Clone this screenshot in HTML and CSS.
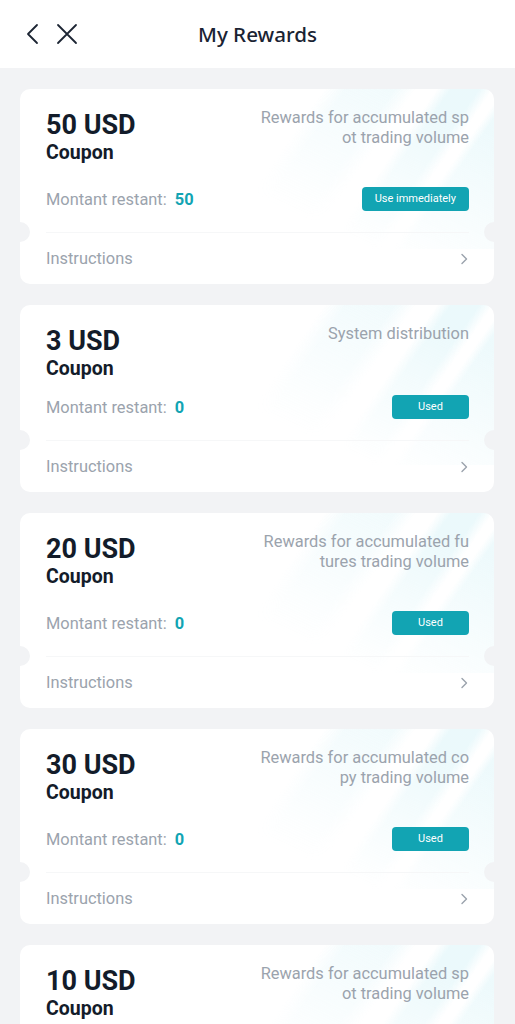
FILE: index.html
```html
<!DOCTYPE html>
<html>
<head>
<meta charset="utf-8">
<link rel="stylesheet" href="styles.css">
</head>
<body>
<header class="topbar">
  <div class="nav-icons">
    <svg class="icon" width="20" height="22" viewBox="0 0 20 22"><path d="M13 2 L4 11 L13 20" fill="none" stroke="#1c2533" stroke-width="1.8" stroke-linecap="round" stroke-linejoin="round"/></svg>
    <svg class="icon" width="22" height="22" viewBox="0 0 22 22"><path d="M2 2 L20 20 M20 2 L2 20" fill="none" stroke="#1c2533" stroke-width="1.8" stroke-linecap="round"/></svg>
  </div>
  <h1 class="title">My Rewards</h1>
</header>
<main class="list">
  <section class="card">
    <div class="top">
      <div class="amount"><div class="value">50 USD</div><div class="kind">Coupon</div></div>
      <div class="desc">Rewards for accumulated sp<br>ot trading volume</div>
    </div>
    <div class="remain-row">
      <div class="remain">Montant restant: <span class="num">50</span></div>
      <button class="btn">Use immediately</button>
    </div>
    <div class="foot"><span>Instructions</span><svg width="8" height="12" viewBox="0 0 8 12"><path d="M2 1.5 L6.5 6 L2 10.5" fill="none" stroke="#9aa2ac" stroke-width="1.4" stroke-linecap="round" stroke-linejoin="round"/></svg></div>
  </section>
  <section class="card">
    <div class="top">
      <div class="amount"><div class="value">3 USD</div><div class="kind">Coupon</div></div>
      <div class="desc">System distribution</div>
    </div>
    <div class="remain-row">
      <div class="remain">Montant restant: <span class="num">0</span></div>
      <button class="btn used">Used</button>
    </div>
    <div class="foot"><span>Instructions</span><svg width="8" height="12" viewBox="0 0 8 12"><path d="M2 1.5 L6.5 6 L2 10.5" fill="none" stroke="#9aa2ac" stroke-width="1.4" stroke-linecap="round" stroke-linejoin="round"/></svg></div>
  </section>
  <section class="card">
    <div class="top">
      <div class="amount"><div class="value">20 USD</div><div class="kind">Coupon</div></div>
      <div class="desc">Rewards for accumulated fu<br>tures trading volume</div>
    </div>
    <div class="remain-row">
      <div class="remain">Montant restant: <span class="num">0</span></div>
      <button class="btn used">Used</button>
    </div>
    <div class="foot"><span>Instructions</span><svg width="8" height="12" viewBox="0 0 8 12"><path d="M2 1.5 L6.5 6 L2 10.5" fill="none" stroke="#9aa2ac" stroke-width="1.4" stroke-linecap="round" stroke-linejoin="round"/></svg></div>
  </section>
  <section class="card">
    <div class="top">
      <div class="amount"><div class="value">30 USD</div><div class="kind">Coupon</div></div>
      <div class="desc">Rewards for accumulated co<br>py trading volume</div>
    </div>
    <div class="remain-row">
      <div class="remain">Montant restant: <span class="num">0</span></div>
      <button class="btn used">Used</button>
    </div>
    <div class="foot"><span>Instructions</span><svg width="8" height="12" viewBox="0 0 8 12"><path d="M2 1.5 L6.5 6 L2 10.5" fill="none" stroke="#9aa2ac" stroke-width="1.4" stroke-linecap="round" stroke-linejoin="round"/></svg></div>
  </section>
  <section class="card">
    <div class="top">
      <div class="amount"><div class="value">10 USD</div><div class="kind">Coupon</div></div>
      <div class="desc">Rewards for accumulated sp<br>ot trading volume</div>
    </div>
    <div class="remain-row">
      <div class="remain">Montant restant: <span class="num">10</span></div>
      <button class="btn">Use immediately</button>
    </div>
    <div class="foot"><span>Instructions</span><svg width="8" height="12" viewBox="0 0 8 12"><path d="M2 1.5 L6.5 6 L2 10.5" fill="none" stroke="#9aa2ac" stroke-width="1.4" stroke-linecap="round" stroke-linejoin="round"/></svg></div>
  </section>
</main>
</body>
</html>
```
FILE: styles.css
```css
* { box-sizing: border-box; }
html, body { margin: 0; padding: 0; }
body {
  background: #f2f3f5;
  font-family: Roboto, "Noto Sans", Arial, sans-serif;
  width: 515px;
  height: 1024px;
  overflow: hidden;
}
.topbar {
  position: relative;
  height: 68px;
  background: #fff;
  display: flex;
  align-items: center;
  justify-content: center;
}
.nav-icons {
  position: absolute;
  left: 24px;
  top: 23px;
  display: flex;
  gap: 12px;
  align-items: center;
}
.icon { display: block; }
.title {
  margin: 0;
  font-family: "Noto Sans", sans-serif;
  font-size: 20.6px;
  font-weight: 500;
  color: #1a2333;
}
.list {
  padding: 21px 21px 0 20px;
  display: flex;
  flex-direction: column;
  gap: 21px;
}
.card {
  position: relative;
  background: #fff;
  border-radius: 10px;
  padding: 19px 25px 0 26px;
  overflow: hidden;
}
.card::before {
  content: "";
  position: absolute;
  top: 0;
  right: 0;
  width: 240px;
  height: 160px;
  background:
    linear-gradient(125deg, transparent 0 20%, rgba(205,240,246,0.28) 26% 40%, transparent 46% 52%, rgba(205,240,246,0.4) 56% 64%, transparent 68% 71%, rgba(205,240,246,0.35) 74% 100%);
  -webkit-mask-image: linear-gradient(205deg, #000 15%, transparent 80%);
  mask-image: linear-gradient(205deg, #000 15%, transparent 80%);
  pointer-events: none;
}
.top {
  position: relative;
  display: flex;
  justify-content: space-between;
  align-items: flex-start;
}
.value {
  font-size: 27px;
  font-weight: 700;
  line-height: 34px;
  color: #131c2a;
}
.kind {
  font-size: 19.5px;
  font-weight: 700;
  line-height: 22px;
  color: #131c2a;
}
.desc {
  text-align: right;
  font-size: 16.4px;
  line-height: 19.5px;
  color: #9ba3ad;
  padding-bottom: 25px;
}
.remain-row {
  position: relative;
  margin-top: 15px;
  height: 24px;
  display: flex;
  align-items: center;
  justify-content: space-between;
}
.remain {
  font-size: 16.4px;
  color: #9ba3ad;
}
.num {
  color: #12a4b3;
  font-weight: 700;
  margin-left: 4px;
}
.btn {
  border: 0;
  background: #12a4b3;
  color: #fff;
  font-family: Roboto, sans-serif;
  font-size: 11px;
  height: 24px;
  padding: 0 13px;
  border-radius: 4px;
  line-height: 24px;
}
.btn.used { width: 77px; padding: 0; }
.foot {
  position: relative;
  margin-top: 21px;
  height: 52px;
  border-top: 1px solid #f6f7f8;
  display: flex;
  align-items: center;
  justify-content: space-between;
  font-size: 16.4px;
  color: #9ba3ad;
  padding-right: 1px;
}
.foot::before, .foot::after {
  content: "";
  position: absolute;
  top: -11px;
  width: 20px;
  height: 20px;
  border-radius: 50%;
  background: #f2f3f5;
}
.foot::before { left: -36px; }
.foot::after { right: -35px; }
```
